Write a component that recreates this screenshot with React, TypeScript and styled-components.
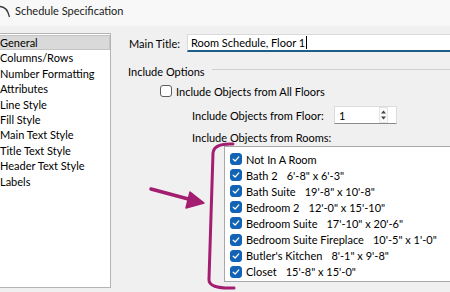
import React from 'react';
import styled, { createGlobalStyle } from 'styled-components';

const GlobalStyle = createGlobalStyle`
  body {
    margin: 0;
    font-family: Lato, "Noto Sans", sans-serif;
    font-size: 11px;
    color: #000;
  }
`;

const navItems = [
  'General',
  'Columns/Rows',
  'Number Formatting',
  'Attributes',
  'Line Style',
  'Fill Style',
  'Main Text Style',
  'Title Text Style',
  'Header Text Style',
  'Labels',
];

const rooms = [
  { name: 'Not In A Room', size: '' },
  { name: 'Bath 2', size: `6'-8" x 6'-3"` },
  { name: 'Bath Suite', size: `19'-8" x 10'-8"` },
  { name: 'Bedroom 2', size: `12'-0" x 15'-10"` },
  { name: 'Bedroom Suite', size: `17'-10" x 20'-6"` },
  { name: 'Bedroom Suite Fireplace', size: `10'-5" x 1'-0"` },
  { name: "Butler's Kitchen", size: `8'-1" x 9'-8"` },
  { name: 'Closet', size: `15'-8" x 15'-0"` },
];

const Check = ({ checked }: { checked: boolean }) => (
  <CheckBox checked={checked}>
    {checked ? (
      <svg width="8" height="8" viewBox="0 0 8 8">
        <path d="M1.2 4.2 L3.2 6 L6.8 1.9" fill="none" stroke="#fff" strokeWidth="1.2" strokeLinecap="round" strokeLinejoin="round" />
      </svg>
    ) : null}
  </CheckBox>
);

const App: React.FC = () => {
  return (
    <>
      <GlobalStyle />
      <Window>
        <TitleBar>
          <svg width="12" height="22" viewBox="0 0 12 22">
            <path d="M0 6.5 Q7 6.5 9.5 17" fill="none" stroke="#3a3a3a" strokeWidth="1.3" />
          </svg>
          <TitleText>Schedule Specification</TitleText>
        </TitleBar>
        <Body>
          <NavList>
            {navItems.map((item, i) => (
              <NavItem key={item} selected={i === 0}>{item}</NavItem>
            ))}
          </NavList>
          <Content>
            <TitleRow>
              <span>Main Title:</span>
              <TextInput>Room Schedule, Floor 1<Caret /></TextInput>
            </TitleRow>
            <GroupHeader>
              <span>Include Options</span>
              <GroupLine />
            </GroupHeader>
            <OptionRow indent={31}>
              <Check checked={false} />
              <span>Include Objects from All Floors</span>
            </OptionRow>
            <FloorRow>
              <FloorLabel>Include Objects from Floor:</FloorLabel>
              <SpinBox>
                <span>1</span>
                <SpinButtons>
                  <svg width="7" height="12" viewBox="0 0 7 12">
                    <path d="M3.5 1.5 L6 4.5 L1 4.5 Z" fill="#444" />
                    <path d="M3.5 10.5 L6 7.5 L1 7.5 Z" fill="#444" />
                  </svg>
                </SpinButtons>
              </SpinBox>
            </FloorRow>
            <RoomsLabel>Include Objects from Rooms:</RoomsLabel>
            <RoomList>
              {rooms.map((room) => (
                <RoomRow key={room.name}>
                  <Check checked />
                  <span>{room.name}</span>
                  {room.size ? <RoomSize>{room.size}</RoomSize> : null}
                </RoomRow>
              ))}
            </RoomList>
          </Content>
          {/* hand-drawn markup laid over the dialog */}
          <Markup width="450" height="292" viewBox="0 0 450 292">
            <path d="M233 144 Q214 143 213 153 L209 279 Q208 289 234 288" fill="none" stroke="#a31d70" strokeWidth="3" strokeLinecap="round" strokeLinejoin="round" />
            <path d="M151 189 L192 200" fill="none" stroke="#a31d70" strokeWidth="3.5" strokeLinecap="round" />
            <path d="M204 203 L190 192 L186 208 Z" fill="#a31d70" stroke="#a31d70" strokeWidth="1.5" strokeLinejoin="round" />
          </Markup>
        </Body>
      </Window>
    </>
  );
};

const Window = styled.div`
  width: 450px;
  height: 292px;
  overflow: hidden;
  background: #f0f0f0;
  display: flex;
  flex-direction: column;
`;

const TitleBar = styled.div`
  height: 26px;
  flex: none;
  display: flex;
  align-items: flex-start;
  gap: 3px;
  background: #f8f8f8;
`;

const TitleText = styled.div`
  line-height: 22px;
  font-size: 11px;
  color: #1a1a1a;
`;

const Body = styled.div`
  position: relative;
  flex: 1;
  display: flex;
  padding-top: 7px;
  min-height: 0;
`;

const NavList = styled.div`
  width: 111px;
  height: 255px;
  flex: none;
  background: #fff;
  border: 1px solid #b4b4b4;
  border-left: none;
  padding-top: 1px;
  box-sizing: border-box;
`;

const NavItem = styled.div<{ selected?: boolean }>`
  height: 15.4px;
  line-height: 14px;
  white-space: nowrap;
  overflow: hidden;
  box-sizing: border-box;
  background: ${(p) => (p.selected ? '#d9d9d9' : 'transparent')};
  border: 1px solid ${(p) => (p.selected ? '#c4c4c4' : 'transparent')};
  border-left: none;
`;

const Content = styled.div`
  flex: none;
  width: 400px;
  padding-left: 18px;
  display: flex;
  flex-direction: column;
`;

const TitleRow = styled.div`
  display: flex;
  align-items: center;
  gap: 7px;
  margin-top: 1px;
  height: 18px;
`;

const TextInput = styled.div`
  flex: 1;
  height: 18px;
  box-sizing: border-box;
  background: #fff;
  border: 1px solid #dadada;
  border-bottom: 2px solid #1d5d8a;
  padding-left: 3px;
  line-height: 15px;
  display: flex;
  align-items: center;
`;

const Caret = styled.span`
  display: inline-block;
  width: 1px;
  height: 13px;
  background: #000;
  margin-left: 1px;
`;

const GroupHeader = styled.div`
  display: flex;
  align-items: center;
  gap: 7px;
  margin-top: 11px;
  height: 16px;
  margin-left: -1px;
`;

const GroupLine = styled.div`
  flex: 1;
  height: 1px;
  background: #d0d0d0;
  margin-top: -3px;
`;

const OptionRow = styled.div<{ indent: number }>`
  display: flex;
  align-items: center;
  gap: 4px;
  height: 16px;
  margin-top: 4px;
  padding-left: ${(p) => p.indent}px;
`;

const CheckBox = styled.span<{ checked: boolean }>`
  width: 12px;
  height: 12px;
  flex: none;
  box-sizing: border-box;
  border-radius: 3px;
  display: inline-flex;
  align-items: center;
  justify-content: center;
  background: ${(p) => (p.checked ? '#1263b5' : '#fff')};
  border: 1px solid ${(p) => (p.checked ? '#1263b5' : '#5d5d5d')};
`;

const FloorRow = styled.div`
  display: flex;
  align-items: center;
  height: 18px;
  margin-top: 7px;
  padding-left: 63px;
`;

const FloorLabel = styled.span`
  width: 142px;
  flex: none;
  white-space: nowrap;
`;

const SpinBox = styled.div`
  width: 63px;
  height: 18px;
  box-sizing: border-box;
  background: #fff;
  border: 1px solid #dcdcdc;
  border-bottom: 1px solid #8a8a8a;
  display: flex;
  align-items: center;
  justify-content: space-between;
  padding-left: 4px;
  padding-right: 8px;
`;

const SpinButtons = styled.span`
  display: flex;
  align-items: center;
  height: 14px;
  border: 1px solid #e4e4e4;
  background: #fafafa;
`;

const RoomsLabel = styled.div`
  margin-top: 6px;
  height: 16px;
  line-height: 16px;
  padding-left: 63px;
`;

const RoomList = styled.div`
  margin-left: 95px;
  height: 136px;
  box-sizing: border-box;
  background: #fff;
  border: 1px solid #a8a8a8;
  border-right: none;
  padding-top: 4px;
  padding-left: 5px;
`;

const RoomRow = styled.div`
  display: flex;
  align-items: center;
  gap: 4px;
  height: 16.1px;
  white-space: nowrap;
`;

const RoomSize = styled.span`
  margin-left: 5px;
`;

const Markup = styled.svg`
  position: absolute;
  left: 0;
  top: -26px;
  pointer-events: none;
`;

export default App;
